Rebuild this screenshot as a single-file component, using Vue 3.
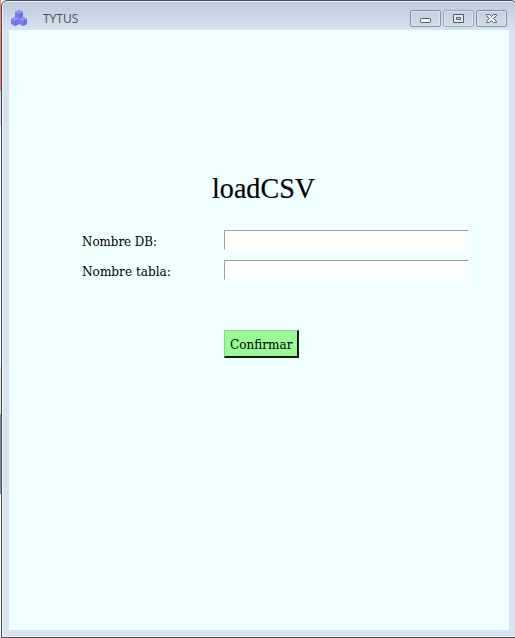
<script setup>
import { ref } from 'vue'
const database = ref('')
const table = ref('')
</script>

<template>
  <div class="desktop">
    <div class="edge"><i class="coral"></i><i class="pale"></i><i class="gray"></i><i class="white"></i><i class="teal"></i></div>
    <div class="window">
      <header class="titlebar">
        <svg class="logo" width="18" height="18" viewBox="0 0 18 18">
          <path d="M5 3 9 1l4 2v5L9 10 5 8z" fill="#767de8" />
          <path d="M5 3 9 1l4 2-4 2z" fill="#8f95f2" />
          <path d="M9 5l4-2v5l-4 2z" fill="#6b72e6" />
          <path d="M1 10l4-2 4 2v5l-4 2-4-2z" fill="#767de8" />
          <path d="M1 10l4-2 4 2-4 2z" fill="#8f95f2" />
          <path d="M5 12l4-2v5l-4 2z" fill="#6b72e6" />
          <path d="M9 10l4-2 4 2v5l-4 2-4-2z" fill="#767de8" />
          <path d="M9 10l4-2 4 2-4 2z" fill="#8f95f2" />
          <path d="M13 12l4-2v5l-4 2z" fill="#6b72e6" />
        </svg>
        <span class="caption">TYTUS</span>
        <div class="controls">
          <button class="control" aria-label="Minimizar">
            <svg width="13" height="11" viewBox="0 0 13 11"><rect x="1.5" y="5.5" width="10" height="4" rx=".7" fill="#f7f7f7" stroke="#555b70" /></svg>
          </button>
          <button class="control soft" aria-label="Maximizar">
            <svg width="13" height="11" viewBox="0 0 13 11"><path fill-rule="evenodd" d="M1.5 1.5h10v8h-10zM4.5 4.5v2h4v-2z" fill="#e9e9ec" stroke="#555b70" /></svg>
          </button>
          <button class="control" aria-label="Cerrar">
            <svg width="13" height="11" viewBox="0 0 13 11"><path d="M1.5 1.5h3l2 2 2-2h3v1L8.7 5.5l2.8 3v1h-3l-2-2-2 2h-3v-1l2.8-3-2.8-3z" fill="#f5f5f5" stroke="#555b70" /></svg>
          </button>
        </div>
      </header>
      <main class="content">
        <h1><span>loadCSV</span></h1>
        <form @submit.prevent>
          <label class="row"><span class="label"><span class="db">Nombre DB:</span></span><input v-model="database" /></label>
          <label class="row"><span class="label"><span class="tb">Nombre tabla:</span></span><input v-model="table" /></label>
          <button class="confirm"><span>Confirmar</span></button>
        </form>
      </main>
    </div>
  </div>
</template>

<style>
body { margin: 0; overflow: hidden; }
</style>

<style scoped>
* { box-sizing: border-box; }
.desktop { width: 515px; height: 638px; display: flex; overflow: hidden; background: #f5fafa; }
.edge { width: 1px; flex: none; display: flex; flex-direction: column; }
.coral { height: 91px; background: #fa8072; }
.pale { height: 34px; background: #d5dadd; }
.gray { height: 242px; background: #f0ffff; }
.white { height: 47px; background: #d8e0e0; }
.teal { height: 80px; background: #6b9c9c; }
.window {
  width: 516px; flex: none; height: 638px;
  border: 1px solid #494c53; border-radius: 6px 6px 0 0;
  box-shadow: inset 0 0 0 1px #edf3fa;
  background: linear-gradient(#bccada 0, #d7e3f1 29px, #d7e3f1 100%);
  padding: 0 7px;
}
.titlebar { height: 29px; display: flex; align-items: flex-start; }
.logo { margin: 8px 0 0 1px; flex: none; }
.caption {
  margin: 9px 0 0 15px; width: 100px; font: 12px/18px "Open Sans", sans-serif;
  color: #494d58;
}
.controls { display: flex; gap: 2px; margin: 9px 2px 0 auto; }
.control {
  width: 31px; height: 17px; padding: 0; display: flex; align-items: center; justify-content: center;
  border: 1px solid #8190b1; border-radius: 2px; background: linear-gradient(#c5d1df, #cfdcea);
  box-shadow: inset 0 0 0 1px #dbe5f0;
}
.soft { border-color: #9ba8bc; }
.content { width: 500px; height: 600px; background: #f0ffff; color: #000; font-family: "Liberation Serif", serif; padding: 140px 0 0 73px; }
h1 { margin: 0 0 0 130px; height: 60px; font-size: 29px; line-height: 36px; font-weight: 400; white-space: nowrap; -webkit-text-stroke: .2px #000; }
h1 span, .label span, .confirm span { display: inline-block; transform-origin: left; }
h1 span { transform: scaleX(.97); }
.row { height: 20px; margin-bottom: 10px; display: flex; }
.label { width: 142px; font: 13px/24px "DejaVu Serif Condensed", "DejaVu Serif", serif; font-stretch: condensed; white-space: nowrap; }
.label .db { transform: scaleX(1.015); }
.label .tb { transform: scaleX(1.035); }
input { width: 245px; height: 20px; padding: 1px 3px; border: 1px solid #fff; border-top-color: #a0a0a0; border-left-color: #a0a0a0; border-radius: 0; background: #fff; outline: 0; }
.confirm {
  margin: 50px 0 0 142px; width: 75px; height: 28px; padding: 2px 0 0; display: flex; justify-content: center; align-items: center;
  border: solid; border-width: 1px 2px 2px 1px; border-color: #8bd58b #102010 #102010 #8bd58b; border-radius: 0;
  background: #98fb98; color: #000; font: 13px/22px "DejaVu Serif Condensed", "DejaVu Serif", serif; font-stretch: condensed;
}
.confirm span { transform: scaleX(1.03); transform-origin: center; }
</style>
